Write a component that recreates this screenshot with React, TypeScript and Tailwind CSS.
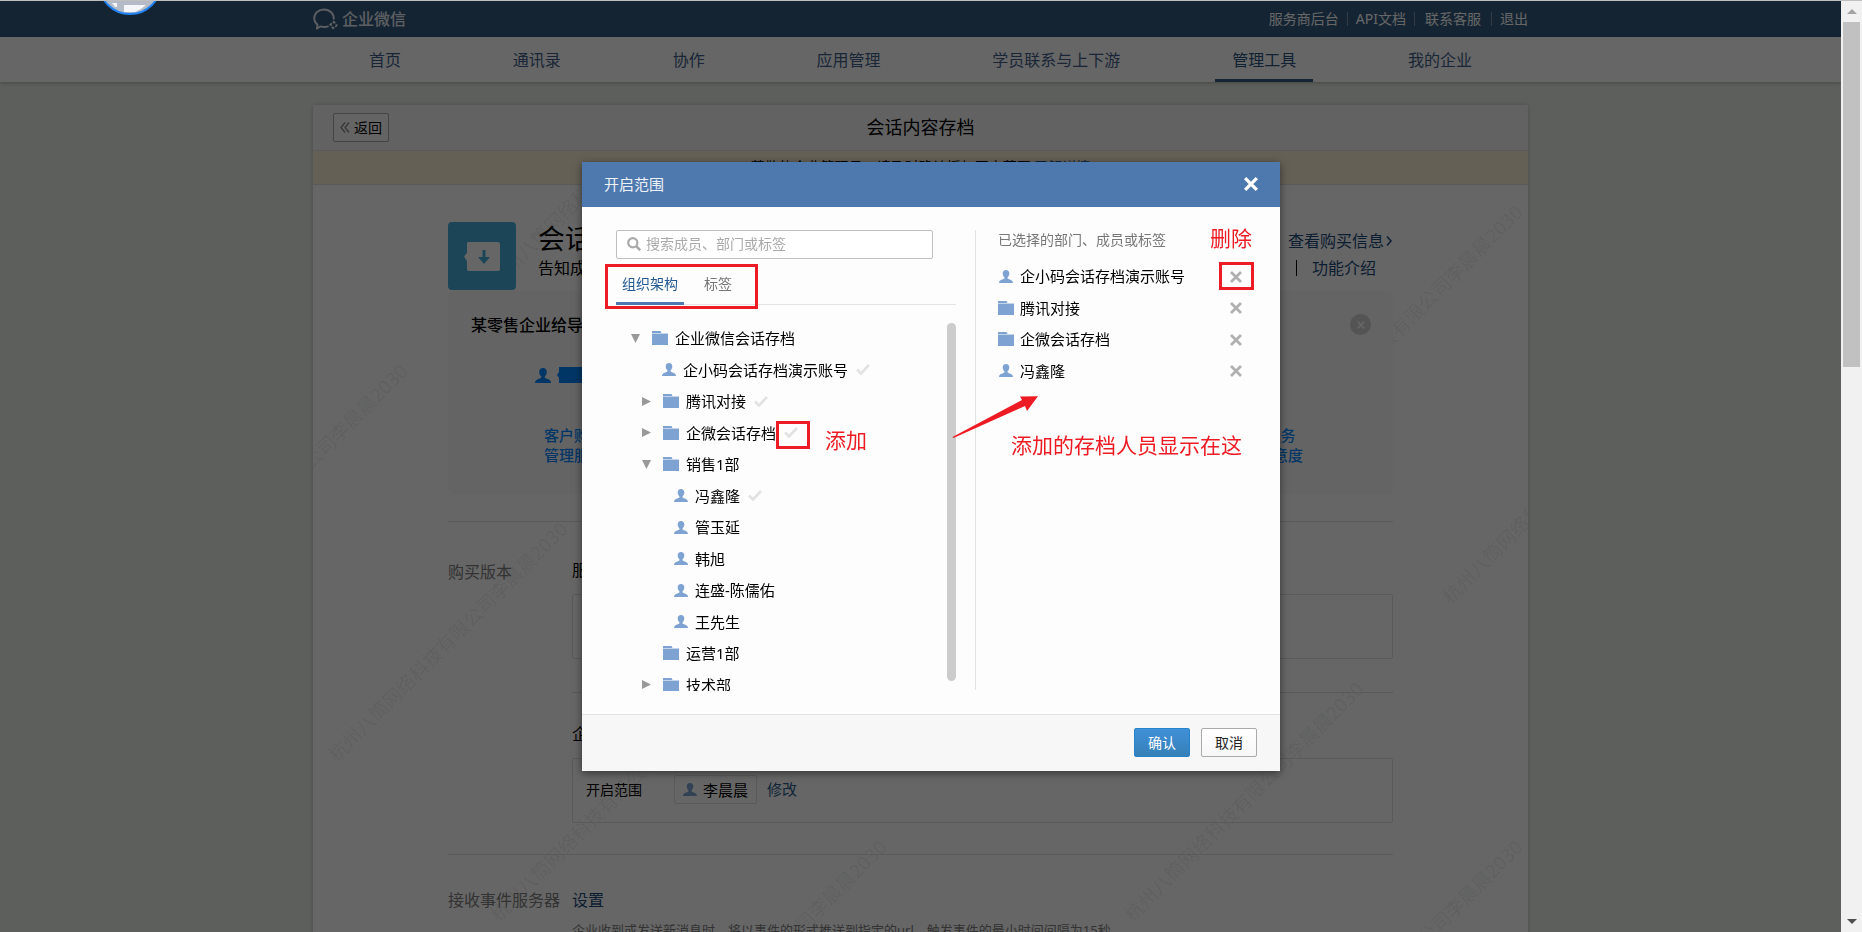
import { useState } from "react";

const navItems = ["首页", "通讯录", "协作", "应用管理", "学员联系与上下游", "管理工具", "我的企业"];

type Row = {
  name: string;
  kind: "folder" | "person";
  level: number;
  arrow?: "open" | "closed";
  checked?: boolean;
};

const treeRows: Row[] = [
  { name: "企业微信会话存档", kind: "folder", level: 0, arrow: "open" },
  { name: "企小码会话存档演示账号", kind: "person", level: 1, checked: true },
  { name: "腾讯对接", kind: "folder", level: 1, arrow: "closed", checked: true },
  { name: "企微会话存档", kind: "folder", level: 1, arrow: "closed", checked: true },
  { name: "销售1部", kind: "folder", level: 1, arrow: "open" },
  { name: "冯鑫隆", kind: "person", level: 2, checked: true },
  { name: "管玉延", kind: "person", level: 2 },
  { name: "韩旭", kind: "person", level: 2 },
  { name: "连盛-陈儒佑", kind: "person", level: 2 },
  { name: "王先生", kind: "person", level: 2 },
  { name: "运营1部", kind: "folder", level: 1 },
  { name: "技术部", kind: "folder", level: 1, arrow: "closed" },
];

const initialSelected: { name: string; kind: "folder" | "person" }[] = [
  { name: "企小码会话存档演示账号", kind: "person" },
  { name: "腾讯对接", kind: "folder" },
  { name: "企微会话存档", kind: "folder" },
  { name: "冯鑫隆", kind: "person" },
];

// Centre points of the repeated watermark, relative to the card body
const watermarks = [
  { x: 297, y: -18 },
  { x: 931, y: -18 },
  { x: 454, y: 140 },
  { x: 1090, y: 140 },
  { x: -25, y: 299 },
  { x: 611, y: 299 },
  { x: 1249, y: 299 },
  { x: 135, y: 457 },
  { x: 771, y: 457 },
  { x: 297, y: 617 },
  { x: 931, y: 617 },
  { x: 454, y: 775 },
  { x: 1090, y: 775 },
];

const indent = ["pl-[15px]", "pl-[26px]", "pl-[38px]"];

function PersonIcon({ className }: { className?: string }) {
  return (
    <svg viewBox="0 0 14 13" className={className} fill="currentColor" aria-hidden="true">
      <path d="M7 0C4.900 0 3.700 1.300 3.700 3.200c0 1.700.6 3.200 1.700 4v1.300C4.800 9.400 0 9.600 0 13h14c0-3.400-4.800-3.600-5.400-4.500V7.200c1.100-.8 1.700-2.300 1.700-4C10.300 1.300 9.100 0 7 0z" />
    </svg>
  );
}

function FolderIcon() {
  return (
    <svg viewBox="0 0 16 14" className="h-[14px] w-4 shrink-0" aria-hidden="true">
      <path d="M0 0h8.500l1 2H0z" fill="#7ea3d2" />
      <path d="M0 2h16v1H0z" fill="#c4d5ea" />
      <path d="M0 3h16v11H0z" fill="#7ea3d2" />
    </svg>
  );
}

function NodeIcon({ kind }: { kind: "folder" | "person" }) {
  if (kind === "folder") return <FolderIcon />;
  return <PersonIcon className="h-[13px] w-[14px] shrink-0 text-[#7ea3d2]" />;
}

function Arrow({ state }: { state?: "open" | "closed" }) {
  return (
    <span className="flex w-[9px] shrink-0 items-center">
      {state && (
        <svg viewBox="0 0 9 9" className="h-[9px] w-[9px]" fill="#999" aria-hidden="true">
          {state === "open" ? <path d="M0 0h9L4.500 9z" /> : <path d="M0 0v9l9-4.500z" />}
        </svg>
      )}
    </span>
  );
}

function Cross({ className }: { className?: string }) {
  return (
    <svg viewBox="0 0 12 12" className={className} fill="none" stroke="currentColor" aria-hidden="true">
      <path d="M1 1l10 10M11 1L1 11" strokeWidth="2.800" />
    </svg>
  );
}

function Header() {
  return (
    <header className="h-9 bg-[#325a80]">
      <div className="mx-auto flex h-full max-w-[1215px] items-center justify-between">
        <div className="flex items-center gap-[3px] text-[#e8eef4]">
          <svg viewBox="0 0 26 22" className="h-[22px] w-[26px]" fill="none" stroke="currentColor" aria-hidden="true">
            <path d="M20.800 11.500C21.300 5.500 16.500 1.500 11 1.500S1.200 5.300 1.200 10.300c0 2.600 1.300 4.900 3.300 6.400L4 20.300l3.600-1.900c2.700.9 5.600.7 8-.3" strokeWidth="1.800" />
            <path d="M20.500 13v2.500M24.500 17h-2M20.500 21v-2.300M16.500 17H19M20.500 13l1.800 2.200M24.500 17l-2.200 1.800M20.500 21l-1.800-2.200M16.500 17l2.200-1.800" strokeWidth="1.500" />
          </svg>
          <span className="text-base font-medium leading-5">企业微信</span>
        </div>
        <nav className="flex items-center text-sm leading-5 text-white">
          <a href="#provider">服务商后台</a>
          <span className="mx-2 h-[14px] w-px bg-[#7f95ab]" />
          <a href="#api">API文档</a>
          <span className="ml-2 mr-[10px] h-[14px] w-px bg-[#7f95ab]" />
          <a href="#service">联系客服</a>
          <span className="ml-[10px] mr-2 h-[14px] w-px bg-[#7f95ab]" />
          <a href="#logout">退出</a>
        </nav>
      </div>
    </header>
  );
}

function MainNav() {
  return (
    <nav className="h-[45px] bg-white shadow-[0_1px_4px_rgba(0,0,0,0.25)]">
      <div className="mx-auto flex h-full max-w-[1215px] justify-between px-[39px]">
        {navItems.map((item) => (
          <a
            key={item}
            href="#nav"
            className={`flex items-center border-b-[3px] px-[17px] pt-[3px] text-base ${
              item === "管理工具" ? "border-[#325a80] text-[#2a5580]" : "border-transparent text-[#41608a]"
            }`}
          >
            {item}
          </a>
        ))}
      </div>
    </nav>
  );
}

function Watermarks() {
  return (
    <div className="pointer-events-none absolute inset-0 overflow-hidden" aria-hidden="true">
      {watermarks.map((w) => (
        <span
          key={`${w.x}-${w.y}`}
          className="absolute -translate-x-1/2 -translate-y-1/2 -rotate-45 whitespace-nowrap text-[19px] text-black/8"
          style={{ left: w.x, top: w.y }}
        >
          杭州八筒网络科技有限公司李晨晨2030
        </span>
      ))}
    </div>
  );
}

function ArchivePage() {
  return (
    <main className="mx-auto mt-[23px] max-w-[1215px] rounded-t bg-white shadow-[0_0_4px_rgba(0,0,0,0.2)]">
      <div className="grid h-[46px] grid-cols-3 items-center border-b border-[#e2e2e2] bg-[#f6f6f6] px-5">
        <button className="flex h-[29px] w-14 items-center justify-center gap-1 rounded-xs border border-[#aaa] bg-[#fbfbfb] text-sm leading-5">
          <svg viewBox="0 0 10 11" className="h-[11px] w-[10px]" fill="none" stroke="#888" aria-hidden="true">
            <path d="M5 .5L1 5.500l4 5M9 .5L5 5.500l4 5" strokeWidth="1.300" />
          </svg>
          返回
        </button>
        <h1 className="pb-[2px] text-center text-lg leading-6">会话内容存档</h1>
      </div>
      <p className="h-[34px] border-b border-[#e2e2d8] bg-[#fdf0d7] text-center text-sm leading-8">
        尊敬的企业管理员，请及时确认授权开启范围 <a href="#detail" className="text-[#2b5a8c]">了解详情</a>
      </p>

      <div className="relative pb-40">
        <Watermarks />
        <div className="relative mx-[135px] pt-[37px]">
          <div className="flex">
            <div className="flex h-[68px] w-[68px] items-center justify-center rounded bg-[#46afdc]">
              <svg viewBox="0 0 36 29" className="h-[29px] w-9" aria-hidden="true">
                <path d="M4 0h30a2 2 0 0 1 2 2v25a2 2 0 0 1-2 2H5a2 2 0 0 1-2-2v-8L0 14.500 3 11V1z" fill="#fff" />
                <path d="M18.500 8h3v7H26l-6 7-6-7h4.500z" fill="#46afdc" />
              </svg>
            </div>
            <div className="ml-[22px] flex-1">
              <h2 className="text-[27px] leading-[34px]">会话内容存档</h2>
              <p className="text-base leading-6">告知成员后，可存档成员的会话内容</p>
            </div>
            <div className="w-[105px] pt-[7px] text-base text-[#1d4a7c]">
              <a href="#purchase" className="flex items-center gap-[2px] leading-6">
                查看购买信息
                <svg viewBox="0 0 6 10" className="h-[10px] w-[6px]" fill="none" stroke="currentColor" aria-hidden="true">
                  <path d="M1 .5L5 5 1 9.500" strokeWidth="1.500" />
                </svg>
              </a>
              <div className="mt-[3px] flex items-center pl-2 leading-6">
                <span className="mr-[15px] h-4 w-px bg-black" />
                <a href="#intro">功能介绍</a>
              </div>
            </div>
          </div>

          <section className="relative mt-px h-[203px] rounded-md bg-[#fafafa] pl-[23px] pt-5 text-[#0088ff]">
            <h3 className="text-base font-medium leading-7 text-black">某零售企业给导购开启会话存档</h3>
            <button
              aria-label="收起"
              className="absolute right-[22px] top-[23px] flex h-[21px] w-[21px] items-center justify-center rounded-full bg-[#d2d2d2] text-[#fafafa]"
            >
              <Cross className="h-2 w-2" />
            </button>
            <div className="ml-16 mt-7 flex items-center gap-[6px]">
              <PersonIcon className="h-[15px] w-4" />
              <svg viewBox="0 0 120 16" className="h-4 w-[120px]" fill="currentColor" aria-hidden="true">
                <path d="M2 0h118v16H2v-5L0 8l2-3z" />
              </svg>
            </div>
            <div className="mt-[42px] flex justify-between pl-[73px] pr-[90px] text-[15px] font-medium leading-5">
              <p>客户购买前<br />管理服务过程</p>
              <p className="text-center">提升客户服务<br />提高客户满意度</p>
            </div>
          </section>

          <section className="mt-[27px] flex border-t border-[#e2e2e2] pt-9">
            <h3 className="w-[124px] pt-[2px] text-base leading-6 text-[#808080]">购买版本</h3>
            <div className="flex-1">
              <p className="text-base leading-6">服务版</p>
              <div className="mt-3 h-[65px] rounded-xs border border-[#e2e2e2]" />
              <div className="mt-[33px] border-t border-[#e2e2e2] pt-[29px]">
                <p className="text-base leading-6">企业版</p>
                <div className="mt-3 flex h-[65px] items-center rounded-xs border border-[#e2e2e2] pb-[2px] pl-[13px]">
                  <span className="w-[88px] text-sm">开启范围</span>
                  <span className="flex h-[29px] items-center gap-[6px] rounded-xs border border-[#e2e2e2] px-2 text-[15px] leading-5">
                    <PersonIcon className="h-[13px] w-[14px] text-[#7ea3d2]" />
                    李晨晨
                  </span>
                  <a href="#edit" className="ml-[10px] text-[15px] text-[#2b5a8c]">修改</a>
                </div>
              </div>
            </div>
          </section>

          <section className="mt-[31px] flex border-t border-[#e2e2e2] pt-[33px]">
            <h3 className="w-[124px] text-base leading-6 text-[#808080]">接收事件服务器</h3>
            <div className="flex-1">
              <a href="#setup" className="text-base leading-6 text-[#1d4a7c]">设置</a>
              <p className="mt-[6px] text-[13px] leading-6 text-[#808080]">
                企业收到或发送新消息时，将以事件的形式推送到指定的url，触发事件的最小时间间隔为15秒
              </p>
            </div>
          </section>
        </div>
      </div>
    </main>
  );
}

function PageScrollbar() {
  return (
    <div className="flex w-[21px] shrink-0 flex-col items-center bg-[#f1f1f1]" aria-hidden="true">
      <svg viewBox="0 0 10 5" className="my-2 h-[5px] w-[10px] shrink-0" fill="#a3a3a3">
        <path d="M5 0l5 5H0z" />
      </svg>
      <div className="h-[345px] w-[17px] bg-[#c1c1c1]" />
      <svg viewBox="0 0 10 5" className="mb-2 mt-auto h-[5px] w-[10px] shrink-0" fill="#505050">
        <path d="M0 0h10L5 5z" />
      </svg>
    </div>
  );
}

// Red marks drawn over the dialog to explain the steps
function Annotations() {
  return (
    <div className="pointer-events-none absolute inset-0 text-[21px] leading-7 text-[#ed1c24]">
      <div className="absolute left-[23px] top-[102px] h-[45px] w-[153px] border-[3px] border-[#ed1c24]" />
      <div className="absolute left-[194px] top-[259px] h-7 w-[34px] border-[3px] border-[#ed1c24]" />
      <div className="absolute left-[637px] top-[100px] h-7 w-[35px] border-[3px] border-[#ed1c24]" />
      <span className="absolute left-[243px] top-[264px]">添加</span>
      <span className="absolute left-[628px] top-[62px]">删除</span>
      <span className="absolute left-[429px] top-[269px] whitespace-nowrap">添加的存档人员显示在这</span>
      <svg viewBox="0 0 87 43" className="absolute left-[370px] top-[234px] h-[43px] w-[87px]" fill="#ed1c24" aria-hidden="true">
        <path d="M.5 41L70 4 68 .5 86 .3 75 15l-2-5L1.500 42z" />
      </svg>
    </div>
  );
}

function ScopeDialog() {
  const [tab, setTab] = useState("组织架构");
  const [selected, setSelected] = useState(initialSelected);

  return (
    <div role="dialog" aria-label="开启范围" className="relative flex w-[698px] flex-col bg-[#fdfdfd] shadow-[0_2px_8px_rgba(0,0,0,0.5)]">
      <div className="flex h-[45px] items-center justify-between bg-[#4e79ae] pl-[22px] pr-[22px] text-white">
        <h2 className="text-[15px] text-[#eef2f7]">开启范围</h2>
        <button aria-label="关闭">
          <Cross className="h-[14px] w-[14px]" />
        </button>
      </div>

      <div className="flex px-[34px] py-[23px]">
        <div className="w-[340px]">
          <label className="flex h-[29px] w-[317px] items-center gap-[5px] rounded-xs border border-[#c0c0c0] bg-white px-[10px]">
            <svg viewBox="0 0 14 14" className="h-[14px] w-[14px]" fill="none" stroke="#aaa" aria-hidden="true">
              <circle cx="5.800" cy="5.800" r="4.600" strokeWidth="2.200" />
              <path d="M9.200 9.200l4 4" strokeWidth="2.600" />
            </svg>
            <input
              type="text"
              aria-label="搜索"
              placeholder="搜索成员、部门或标签"
              className="min-w-0 flex-1 bg-transparent text-sm leading-5 outline-none placeholder:text-[#aaa]"
            />
          </label>
          <div role="tablist" className="mt-2 flex h-[38px] gap-[14px] border-b border-[#e4e4e4] text-sm">
            {["组织架构", "标签"].map((t) => (
              <button
                key={t}
                role="tab"
                aria-selected={tab === t}
                onClick={() => setTab(t)}
                className={`-mb-px border-b-[3px] px-[6px] ${
                  tab === t ? "border-[#4e79ae] text-[#245a94]" : "border-transparent text-[#777]"
                }`}
              >
                {t}
              </button>
            ))}
          </div>

          <div className="mt-[18px] flex h-[368px] justify-between overflow-hidden">
            <ul className="grid h-[378px] flex-1 auto-rows-fr text-[15px]">
              {treeRows.map((row) => (
                <li key={row.name} className={`flex items-center ${indent[row.level]}`}>
                  {row.kind === "folder" && (
                    <span className="mr-3 flex">
                      <Arrow state={row.arrow} />
                    </span>
                  )}
                  <span className={row.kind === "person" ? "ml-5 mr-[7px]" : "mr-[7px]"}>
                    <NodeIcon kind={row.kind} />
                  </span>
                  <span className="leading-6">{row.name}</span>
                  {row.checked && (
                    <svg viewBox="0 0 14 11" className="ml-2 h-[11px] w-[14px]" fill="none" stroke="#e2e2e2" aria-hidden="true">
                      <path d="M1 5.500l4 4L13 1" strokeWidth="2.600" />
                    </svg>
                  )}
                </li>
              ))}
            </ul>
            <div className="h-[358px] w-[9px] rounded-full bg-[#ccc]" />
          </div>
        </div>

        <div className="ml-[19px] h-[460px] flex-1 border-l border-[#e2e2e2] pl-[22px]">
          <h3 className="text-sm leading-5 text-[#777]">已选择的部门、成员或标签</h3>
          <ul className="mt-[11px] grid h-[126px] auto-rows-[1fr] grid-rows-4 text-[15px]">
            {selected.map((item) => (
              <li key={item.name} className="flex items-center">
                <span className="mr-[6px] flex w-4 justify-center">
                  <NodeIcon kind={item.kind} />
                </span>
                <span className="leading-6">{item.name}</span>
                <button
                  aria-label={`删除${item.name}`}
                  className="ml-auto mr-1 pt-px text-[#b0b0b0]"
                  onClick={() => setSelected(selected.filter((s) => s.name !== item.name))}
                >
                  <Cross className="h-3 w-3" />
                </button>
              </li>
            ))}
          </ul>
        </div>
      </div>

      <div className="flex h-[57px] items-center justify-end gap-[11px] border-t border-[#e2e2e2] bg-[#f7f7f7] pr-[23px] text-sm">
        <button className="h-[29px] w-14 rounded-xs border border-[#2582cc] bg-linear-to-b from-[#4090d8] to-[#3680b8] text-white">
          确认
        </button>
        <button className="h-[29px] w-14 rounded-xs border border-[#aaa] bg-linear-to-b from-white to-[#f7f7f7] text-[#222]">
          取消
        </button>
      </div>
      <Annotations />
    </div>
  );
}

export default function App() {
  return (
    <div className="relative flex h-screen flex-col overflow-hidden border-t border-[#bfbfbf] bg-[#e8eee8] font-['Noto_Sans','Noto_Sans_CJK_SC',sans-serif] text-black">
      <div className="flex min-h-0 flex-1">
        <div className="relative min-w-0 flex-1 overflow-hidden">
          <Header />
          <MainNav />
          <ArchivePage />
          <div className="absolute inset-0 bg-black/60" />
          <svg viewBox="0 0 64 64" className="absolute -top-[50px] left-[98px] h-16 w-16" aria-hidden="true">
            <circle cx="32" cy="32" r="31" fill="#b4bac6" />
            <path d="M14 52h5v4h-2zM26 54h22l-5 4-6 3H26z" fill="#f4f6fa" />
            <circle cx="32" cy="32" r="31" fill="none" stroke="#2285f5" strokeWidth="2" />
          </svg>
        </div>
        <PageScrollbar />
      </div>
      <div className="fixed inset-0 flex items-center justify-center">
        <ScopeDialog />
      </div>
    </div>
  );
}
